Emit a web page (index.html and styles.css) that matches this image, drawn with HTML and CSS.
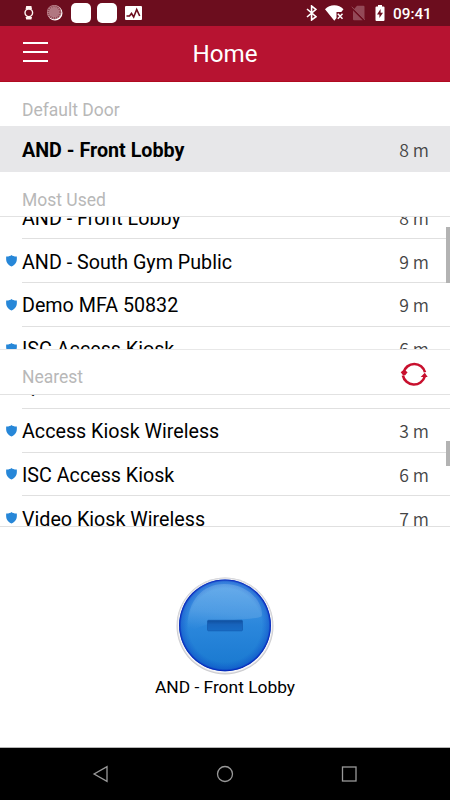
FILE: index.html
```html
<!DOCTYPE html>
<html lang="en">
<head>
    <meta charset="UTF-8">
    <meta name="viewport" content="width=device-width, initial-scale=1.0">
    <title>Home</title>
    <link rel="stylesheet" href="styles.css">
</head>
<body>
    <!-- Shared shield icon -->
    <svg class="defs" width="0" height="0">
        <symbol id="shield" viewBox="0 0 11 12">
            <path fill="#2787d8" d="M5.5 0C4.500 1 2.500 1.600.2 1.500 0 5-.2 8.600 5.500 11.500 11.200 8.600 11 5 10.800 1.500 8.500 1.600 6.500 1 5.500 0z"/>
        </symbol>
    </svg>

    <div class="screen">
        <div class="status-bar">
            <svg class="icon-watch" width="10" height="14" viewBox="0 0 10 14">
                <path fill="#fff6f2" d="M2.2 0h5.2L8 3H1.6zM1.6 11H8l-.6 2.5H2.2z"/>
                <circle cx="4.8" cy="6.8" r="3.8" fill="none" stroke="#fff6f2" stroke-width="1.4"/>
            </svg>
            <svg class="icon-sync" width="16" height="16" viewBox="0 0 16 16">
                <circle cx="8" cy="8" r="7.5" fill="#fff"/>
                <circle cx="7.2" cy="7.2" r="7.3" fill="#b98089"/>
                <circle cx="7.2" cy="7.2" r="5.8" fill="none" stroke="#8d4350" stroke-width="1.8" stroke-dasharray="1 1"/>
                <circle cx="7.2" cy="7.2" r="4.6" fill="#b17781"/>
            </svg>
            <span class="app-dot"></span>
            <span class="app-dot"></span>
            <svg class="icon-chart" width="17" height="14" viewBox="0 0 17 14">
                <rect width="17" height="14" rx="1" fill="#fff"/>
                <path d="M1.5 10h3l2-2.5L8.7 11l3-7.5 3 6.5" fill="none" stroke="#6c0d1e" stroke-width="1.6"/>
            </svg>
            <span class="spacer"></span>
            <svg class="icon-bluetooth" width="11" height="16" viewBox="0 0 11 16">
                <path d="M1 4l9 7.7L5.6 15V1L10 4.4 1 12" fill="none" stroke="#fff" stroke-width="1.6"/>
            </svg>
            <svg class="icon-wifi" width="19" height="16" viewBox="0 0 19 16">
                <path fill="#fff" d="M0 4.3C2.5 1.5 5.7.3 9.3.3s6.8 1.2 9.2 4L16.3 7h-4.8v6L9.3 15.7z"/>
                <path d="M12.8 8.8l4.7 5m0-5l-4.7 5" stroke="#fff" stroke-width="1.5"/>
            </svg>
            <svg class="icon-sim" width="15" height="16" viewBox="0 0 15 16">
                <path fill="#934957" d="M6 .8h6.5q1 0 1 1v13L3.2 4zM2 5.4l9.7 9.8H3q-1 0-1-1z"/>
                <path d="M.7 1.8l13.2 13" stroke="#934957" stroke-width="1"/>
            </svg>
            <svg class="icon-battery" width="10" height="16" viewBox="0 0 10 16">
                <path fill="#fff" d="M3 0h4v1.5h1.5q1 0 1 1V15q0 1-1 1h-7q-1 0-1-1V2.5q0-1 1-1H3z"/>
                <path fill="#6c0d1e" d="M5.6 4L2 9.5h2.4V13L8 7.7H5.6z"/>
            </svg>
            <span class="clock">09:41</span>
        </div>

        <header class="app-bar">
            <div class="menu">
                <span></span>
                <span></span>
                <span></span>
            </div>
            <h1>Home</h1>
        </header>

        <h2 class="section-title">Default Door</h2>
        <div class="default-door">
            <span class="name">AND - Front Lobby</span>
            <span class="distance">8 m</span>
        </div>

        <h2 class="section-title most-used">Most Used</h2>
        <div class="door-list">
            <div class="rows rows-most-used">
                <div class="row">
                    <div class="door"><span class="name">AND - Front Lobby</span><span class="distance">8 m</span></div>
                </div>
                <div class="row">
                    <svg class="shield"><use href="#shield"/></svg>
                    <div class="door"><span class="name">AND - South Gym Public</span><span class="distance">9 m</span></div>
                </div>
                <div class="row">
                    <svg class="shield"><use href="#shield"/></svg>
                    <div class="door"><span class="name">Demo MFA 50832</span><span class="distance">9 m</span></div>
                </div>
                <div class="row">
                    <svg class="shield"><use href="#shield"/></svg>
                    <div class="door"><span class="name">ISC Access Kiosk</span><span class="distance">6 m</span></div>
                </div>
            </div>
            <div class="scrollbar scrollbar-most-used"></div>
        </div>

        <h2 class="section-title nearest">
            Nearest
            <svg class="refresh" width="28" height="28" viewBox="0 0 28 28">
                <g fill="none" stroke="#c8102e" stroke-width="2.6">
                    <path d="M3.6 12.5A11 11 0 0 1 25 12.3"/>
                    <path d="M2.9 15.5A11.3 11.3 0 0 0 24.8 16.5"/>
                </g>
                <path fill="#c8102e" d="M.7 12.3L4 9.5 7.6 12.3 5.2 15.2H3zM20.7 17L24.8 12.8 27.7 17z"/>
            </svg>
        </h2>
        <div class="door-list">
            <div class="rows rows-nearest">
                <div class="row">
                    <div class="door"><span class="name">Q</span></div>
                </div>
                <div class="row">
                    <svg class="shield"><use href="#shield"/></svg>
                    <div class="door"><span class="name">Access Kiosk Wireless</span><span class="distance">3 m</span></div>
                </div>
                <div class="row">
                    <svg class="shield"><use href="#shield"/></svg>
                    <div class="door"><span class="name">ISC Access Kiosk</span><span class="distance">6 m</span></div>
                </div>
                <div class="row">
                    <svg class="shield"><use href="#shield"/></svg>
                    <div class="door"><span class="name">Video Kiosk Wireless</span><span class="distance">7 m</span></div>
                </div>
            </div>
            <div class="scrollbar scrollbar-nearest"></div>
        </div>

        <!-- Unlock button -->
        <div class="unlock">
            <svg width="100" height="100" viewBox="0 0 100 100">
                <defs>
                    <linearGradient id="ball" x1="0" y1="0" x2="0" y2="1">
                        <stop offset="0" stop-color="#4f9fe8"/>
                        <stop offset=".5" stop-color="#2b87dc"/>
                        <stop offset="1" stop-color="#1878cf"/>
                    </linearGradient>
                    <radialGradient id="edge">
                        <stop offset=".8" stop-color="#0a4cc8" stop-opacity="0"/>
                        <stop offset=".95" stop-color="#0a40c4" stop-opacity=".4"/>
                        <stop offset="1" stop-color="#0010b4"/>
                    </radialGradient>
                    <linearGradient id="gloss" x1=".6" y1="0" x2=".4" y2="1">
                        <stop offset="0" stop-color="#fff" stop-opacity=".16"/>
                        <stop offset=".6" stop-color="#fff" stop-opacity=".12"/>
                        <stop offset="1" stop-color="#fff" stop-opacity="0"/>
                    </linearGradient>
                    <linearGradient id="slot" x1="0" y1="0" x2="0" y2="1">
                        <stop offset="0" stop-color="#104f9e"/>
                        <stop offset=".4" stop-color="#1763bb"/>
                        <stop offset="1" stop-color="#176cc5"/>
                    </linearGradient>
                </defs>
                <circle cx="50" cy="51" r="48.5" fill="#cdcdd0"/>
                <circle cx="50" cy="50.5" r="47.8" fill="#dddde1"/>
                <circle cx="50" cy="50.8" r="47" fill="#f6f6f9"/>
                <circle cx="50" cy="50.3" r="45.9" fill="url(#ball)"/>
                <circle cx="50" cy="50.3" r="45.9" fill="url(#edge)"/>
                <path fill="url(#gloss)" d="M13 58C10 30 25 9 49 9 71 9 87 24 87 40 87 47 39 40 13 58z"/>
                <rect x="32.5" y="45.3" width="35" height="10.5" rx="1" fill="url(#slot)" stroke="#1259ad" stroke-width=".7"/>
            </svg>
            <span class="unlock-name">AND - Front Lobby</span>
        </div>

        <nav class="nav-bar">
            <svg width="20" height="20" viewBox="0 0 20 20"><path d="M16 2.7v14.6L3.1 10z"/></svg>
            <svg width="20" height="20" viewBox="0 0 20 20"><circle cx="10" cy="10" r="7.5"/></svg>
            <svg width="20" height="20" viewBox="0 0 20 20"><rect x="3.5" y="3" width="13.5" height="14"/></svg>
        </nav>
    </div>
</body>
</html>
```
FILE: styles.css
```css
* {
    box-sizing: border-box;
}

body {
    margin: 0;
    font-family: Roboto, Arial, sans-serif;
    background-color: #fff;
    color: #000;
}

svg {
    display: block;
    flex-shrink: 0;
}

.defs {
    display: none;
}

.screen {
    display: flex;
    flex-direction: column;
    width: 450px;
    height: 800px;
    overflow: hidden;
}

/* Status bar */
.status-bar {
    display: flex;
    align-items: center;
    height: 26px;
    padding: 0 18px 0 24px;
    background-color: #6c0d1e;
    color: #fff;
}

.icon-sync {
    margin: 0 8px 0 13px;
}

.app-dot {
    width: 20px;
    height: 20px;
    margin-right: 6px;
    border-radius: 5px;
    background-color: #fff;
}

.icon-chart {
    margin-left: 2px;
}

.spacer {
    flex: 1;
}

.icon-wifi {
    margin: 0 7px 0 8px;
}

.icon-battery {
    margin: 0 8px 0 9px;
}

.clock {
    width: 39px;
    padding-top: 1px;
    font-size: 15.3px;
    font-weight: 500;
    white-space: nowrap;
}

/* App bar */
.app-bar {
    display: grid;
    grid-template-columns: 1fr auto 1fr;
    align-items: center;
    height: 56px;
    padding: 0 23px;
    background-color: #b71331;
    border-bottom: 1px solid #b00b20;
    color: #fff;
}

.menu {
    display: flex;
    flex-direction: column;
    gap: 7px;
    width: 25px;
    padding-bottom: 3px;
}

.menu span {
    height: 2px;
    background-color: #fff;
}

.app-bar h1 {
    margin: 0;
    font-size: 24.2px;
    font-weight: 400;
}

/* Sections */
.section-title {
    display: flex;
    justify-content: space-between;
    height: 44px;
    margin: 0;
    padding: 18px 22px 0;
    font-size: 17.5px;
    line-height: 21px;
    font-weight: 400;
    color: #b8b8b8;
}

.section-title.most-used,
.section-title.nearest {
    height: 45px;
    border-bottom: 1px solid #e2e2e2;
}

.section-title.nearest {
    height: 46px;
    padding-top: 17px;
    border-top: 1px solid #e8e8e8;
}

.refresh {
    margin-top: -7px;
}

.default-door {
    display: flex;
    align-items: center;
    justify-content: space-between;
    height: 46px;
    padding: 2px 21px 0 22px;
    background-color: #e7e7e9;
}

.default-door .name {
    font-weight: 700;
}

.name {
    font-size: 19.7px;
}

.distance {
    padding-bottom: 1px;
    font-family: "Noto Sans CJK SC", "Noto Sans", sans-serif;
    font-size: 17.6px;
    font-weight: 350;
    line-height: 22px;
    color: #444;
}

/* Door lists */
.door-list {
    position: relative;
    height: 131.5px;
    overflow: hidden;
}

.rows-most-used {
    margin-top: -21.6px;
}

.rows-nearest {
    margin-top: -29.6px;
}

.row {
    display: flex;
    align-items: center;
    height: 43.8px;
    padding-left: 22px;
}

.shield {
    width: 11px;
    height: 12px;
    margin: 0 5.5px 0 -16.5px;
}

.door {
    display: flex;
    flex: 1;
    align-items: center;
    justify-content: space-between;
    height: 100%;
    padding: 3px 21px 0 0;
    border-bottom: 1px solid #e0e0e0;
}

.scrollbar {
    position: absolute;
    right: 0;
    width: 4px;
    background-color: #b3b3b3;
}

.scrollbar-most-used {
    top: 10px;
    height: 56px;
}

.scrollbar-nearest {
    top: 46px;
    height: 25px;
}

/* Unlock button */
.unlock {
    display: flex;
    flex: 1;
    flex-direction: column;
    align-items: center;
    padding-top: 48px;
    border-top: 1px solid #e0e0e0;
}

.unlock-name {
    font-size: 17.4px;
    line-height: 20px;
    margin-top: 2px;
}

/* Android navigation */
.nav-bar {
    display: flex;
    align-items: center;
    justify-content: space-between;
    height: 53px;
    padding: 0 91px 1px;
    border-top: 1px solid #b5b5b5;
    background-color: #000;
}

.nav-bar svg {
    fill: none;
    stroke: #999;
    stroke-width: 1.3;
}
```
